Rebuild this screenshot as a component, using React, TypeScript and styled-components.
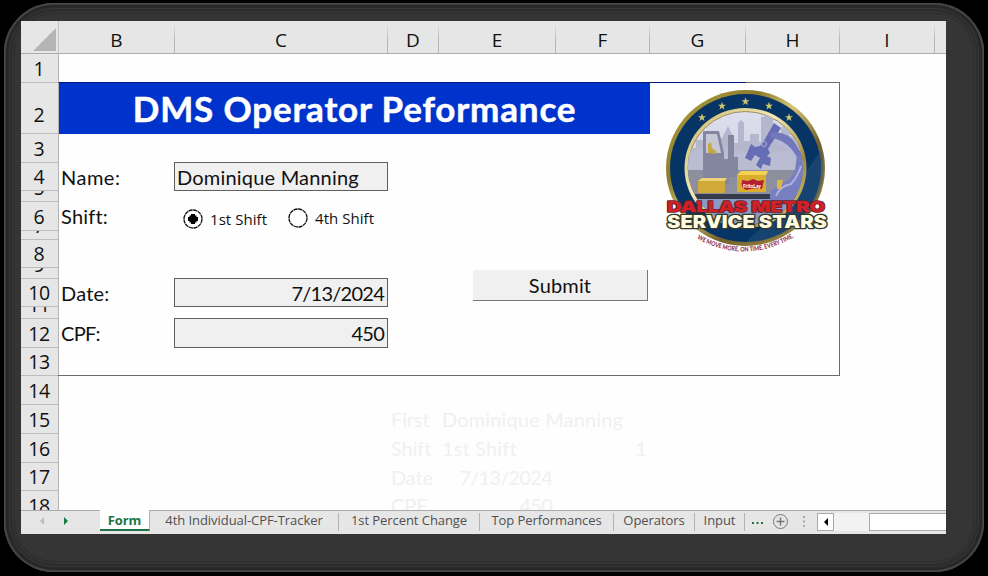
import React from "react";
import styled, { createGlobalStyle } from "styled-components";

const Global = createGlobalStyle`
  *{box-sizing:border-box}
  html,body{margin:0;background:#000}
`;
const Page = styled.div`
  width:988px;height:576px;padding:3px 4px 4px 4px;background:#000;overflow:hidden;
`;
const Bezel = styled.div`
  height:569px;padding:18px 37px 38px 17px;border-radius:50px;background:#353535;
  box-shadow:inset 0 0 0 1px #484848,inset 0 0 0 2px #404040,inset 0 0 0 3px #242424,inset 0 0 0 5px #292929,
    inset 0 0 0 6px #363636,inset 0 0 0 8px #2c2c2c,inset 0 0 0 10px #333,inset 0 0 0 11px #2e2e2e;
`;
const Workbook = styled.main`
  width:925px;height:513px;display:flex;flex-direction:column;background:#fefefe;overflow:hidden;
  font-family:"Open Sans","Noto Sans",sans-serif;color:#111;
`;
const ColumnBar = styled.div`
  height:33px;flex:none;display:grid;grid-template-columns:38px 116px 213px 51px 117px 94px 96px 94px 95px 11px;
  background:#e6e6e6;border-bottom:1px solid #acacac;
`;
const Corner = styled.div`
  border-right:1px solid #c3c3c3;padding:6px 2px 0 12px;svg{display:block}
`;
const ColumnHead = styled.div`
  height:32px;padding-top:5px;font-size:19px;line-height:28px;text-align:center;
  border-right:1px solid;border-image:linear-gradient(#e6e6e6 8%,#b5b5b5 60%) 1;
  &:last-child{border:0}
`;
const Body = styled.div`height:456px;flex:none;display:flex;overflow:hidden;`;
const RowBar = styled.div`width:38px;flex:none;background:#e6e6e6;border-right:1px solid #b4b4b4;`;
const RowHead = styled.div<{ $h: number }>`
  height:${(p) => p.$h}px;padding:0 1px ${(p) => (p.$h > 40 ? 5 : 0)}px 0;border-bottom:1px solid #bdbdbd;
  overflow:hidden;display:flex;align-items:flex-end;justify-content:center;font-size:19.5px;line-height:26px;
  letter-spacing:-0.3px;
  span{flex:none;height:26px}
`;
const Sheet = styled.div`
  flex:1;display:grid;grid-template-columns:116px 213px 51px 117px 94px 96px 94px 95px 11px;
  grid-template-rows:29px 51px 29px 28px 11px 29px 9px 28px 11px 28px 12px 29px 28px 29px 29px 29px 28px 29px;
  font-family:Lato,"Open Sans",sans-serif;
`;
const FormBorder = styled.div`
  grid-area:2 / 1 / 14 / 8;margin:-1px 0 0 -1px;border:1px solid #6b6b6b;border-left:0;
`;
const Title = styled.h1`
  grid-area:2 / 1 / 3 / 6;margin:-1px 0 0;background:#0033cc;border-top:1px solid #001b78;color:#fff;
  font-size:35px;line-height:51px;font-weight:700;text-align:center;letter-spacing:0.82px;white-space:nowrap;
  -webkit-text-stroke:0.5px #fff;
`;
const NavyRule = styled.div`grid-area:2 / 6 / 3 / 7;height:1px;margin-top:-1px;background:#00197c;`;
const Label = styled.div<{ $row: number; $gap?: number }>`
  grid-row:${(p) => p.$row};grid-column:1;padding-left:2px;font-size:20px;line-height:28px;white-space:nowrap;
  letter-spacing:${(p) => p.$gap ?? 0.2}px;
`;
const Field = styled.div<{ $row: number; $end?: boolean }>`
  grid-row:${(p) => p.$row};grid-column:2;margin:-1px 0 0 -1px;border:1px solid #5f5f5f;background:#f0f0f0;
  padding:0 3px 0 2px;font-size:20px;line-height:28px;white-space:nowrap;
  text-align:${(p) => (p.$end ? "right" : "left")};letter-spacing:${(p) => (p.$end ? -0.75 : 0.2)}px;
`;
const Radios = styled.div`
  grid-area:6 / 2 / 7 / 3;display:flex;align-items:flex-start;padding:6px 0 0 8px;
`;
const Radio = styled.label<{ $w: number; $up?: boolean }>`
  width:${(p) => p.$w}px;display:flex;align-items:center;gap:7px;margin-top:${(p) => (p.$up ? -1 : 0)}px;
  font:15px/22px "Open Sans",sans-serif;letter-spacing:0.05px;white-space:nowrap;
  svg{flex:none}
`;
const Submit = styled.button`
  grid-area:9 / 4 / 11 / 6;margin:2px 2px 6px 34px;border:0;border-right:1px solid #777;border-bottom:1px solid #777;
  padding:0;background:#f0f0f0;color:#111;font:20px/30px Lato,sans-serif;letter-spacing:0.15px;
`;
const Ghost = styled.div<{ $row: number; $col: number; $end?: boolean }>`
  grid-row:${(p) => p.$row};grid-column:${(p) => p.$col};color:#f0f0f0;font-size:20px;line-height:29px;
  white-space:nowrap;padding:0 4px 0 3px;text-align:${(p) => (p.$end ? "right" : "left")};
  letter-spacing:${(p) => (p.$end ? -0.75 : p.$col === 4 ? 0.15 : -0.1)}px;
`;
const LogoCell = styled.div`grid-area:2 / 6 / 11 / 8;padding:4px 0 0 14px;svg{display:block}`;
const TabBar = styled.footer`
  height:24px;flex:none;display:flex;background:#e6e6e6;border-top:1px solid #ababab;font-size:13px;color:#505050;
`;
const TabNav = styled.div`width:79px;display:flex;gap:18px;padding:6px 0 0 18px;`;
const Tab = styled.div<{ $w: number; $active?: boolean }>`
  width:${(p) => p.$w}px;flex:none;text-align:center;white-space:nowrap;letter-spacing:-0.06px;
  line-height:${(p) => (p.$active ? 19 : 14)}px;height:${(p) => (p.$active ? 21 : 18)}px;
  margin-top:${(p) => (p.$active ? -1 : 2)}px;padding-top:${(p) => (p.$active ? 1 : 0)}px;
  font-weight:${(p) => (p.$active ? 700 : 400)};color:${(p) => (p.$active ? "#217346" : "#505050")};
  background:${(p) => (p.$active ? "#fff" : "transparent")};
  border-right:1px solid #b2b2b2;border-bottom:${(p) => (p.$active ? "2px solid #217346" : "0")};
`;
const TabTools = styled.div`display:flex;svg{display:block}`;
const Scroll = styled.div`
  flex:1;height:18px;margin-top:2px;display:flex;background:#f2f2f2;
`;
const ScrollButton = styled.div`width:17px;border:1px solid #a9a9a9;background:#fff;svg{display:block}`;
const Thumb = styled.div`flex:1;margin-left:35px;border:1px solid #a9a9a9;border-right:0;background:#fff;`;

const rows = [29, 51, 29, 28, 11, 29, 9, 28, 11, 28, 12, 29, 28, 29, 29, 29, 28, 29];
const columns = ["B", "C", "D", "E", "F", "G", "H", "I", ""];
const tabs: [string, number][] = [
  ["4th Individual-CPF-Tracker", 189], ["1st Percent Change", 141], ["Top Performances", 134],
  ["Operators", 81], ["Input", 50],
];

const Dot = ({ on }: { on?: boolean }) => (
  <svg width="20" height="20" viewBox="0 0 20 20">
    <circle cx="10" cy="10" r="9" fill="#fff" stroke="#111" strokeWidth="1.3" strokeDasharray="4.2 .5" />
    {on && <path d="M8 5h4v1.500h1.500V8H15v4h-1.500v1.500H12V15H8v-1.500H6.500V12H5V8h1.500V6.500H8z" fill="#000" />}
  </svg>
);

const star = "M0-4.200 1-1.200H4L1.600.600 2.500 3.600 0 1.800-2.500 3.600-1.600.600-4-1.200H-1z";

const Logo = () => (
  <svg width="166" height="168" viewBox="664 87 166 168">
    <defs>
      <linearGradient id="gold" x1="0" y1="0" x2="1" y2="1">
        <stop offset="0" stopColor="#b9a844" /><stop offset=".3" stopColor="#8c7a2c" />
        <stop offset=".45" stopColor="#d6c774" /><stop offset=".65" stopColor="#74602a" /><stop offset="1" stopColor="#a8984a" />
      </linearGradient>
      <linearGradient id="rim" x1="0" y1="0" x2="1" y2="1">
        <stop offset="0" stopColor="#c9b461" /><stop offset=".4" stopColor="#f3eab7" />
        <stop offset=".7" stopColor="#a28a3d" /><stop offset="1" stopColor="#e0d28a" />
      </linearGradient>
      <linearGradient id="sky" x1="0" y1="0" x2="0" y2="1">
        <stop offset="0" stopColor="#dedfee" /><stop offset="1" stopColor="#bfc1d4" />
      </linearGradient>
      <clipPath id="scene"><ellipse cx="745.500" cy="168" rx="57.500" ry="56.500" /></clipPath>
      <path id="motto" d="M697 238.500Q746 266 797 235.500" />
    </defs>
    <ellipse cx="745.500" cy="168" rx="79.500" ry="78" fill="url(#gold)" />
    <ellipse cx="745.500" cy="168" rx="75.500" ry="74" fill="#063565" />
    <path d="M821 150A75.500 74 0 0 1 746 242L780 210Z" fill="#28527d" opacity=".5" />
    <ellipse cx="745.500" cy="168" rx="61" ry="60" fill="url(#rim)" />
    <ellipse cx="745.500" cy="168" rx="57.500" ry="56.500" fill="url(#sky)" stroke="#8a7a43" strokeWidth=".8" />
    <g clipPath="url(#scene)">
      <path d="M686 171V148h10v-8h10v-8h10v6h6l6-12 6 12v5h4v-20l3-3 3 3v18h6v-7h9v8h2v-25h3v-3h7v3h2v18h8v-8h9v12h10v31z" fill="#b4b7cd" />
      <path d="M687 155q20-14 45-6t73-2v25H687z" fill="#bdc0d2" opacity=".65" />
      <path d="M685 170h122v30H685z" fill="#8c8f9e" />
      <path d="M688 194h115v6H688z" fill="#353b4a" />
      <path d="M685 199h122v30H685z" fill="#8a9ac4" />
      <path d="M703 176v-44q0-1 2-1h14l5 22v6h4v-24h6v22h4v20h-9v7h-26z" fill="#84869f" />
      <path d="M706 134h11l4 19h-15z" fill="#c7c8d7" />
      <path d="m708 144 3-2 1 6 5 4-2 2-7-1z" fill="#c5a948" />
      <path d="M775 136q15-7 23 9l2 24q-6-18-25-27z" fill="#b7b9d8" />
      <path d="m774 123 7 5-13 21 2 4-3 3 4 2-1 8-7-2-2 5-5-4 4-7-5-3-4 6-6-3 6-14 4 3 5-1 5-7z" fill="#666db5" />
      <path d="M771 133q18-3 27 15l5 8-4 5q-10-21-28-23z" fill="#7378bb" />
      <circle cx="764" cy="144" r="2.500" fill="none" stroke="#aaaede" />
      <path d="M797 155q9 1 9 13l-3 33h-32q-4-10 6-14 15-7 18-17z" fill="#777fc0" />
      <path d="M776 196q4-10 15-12 7-8 10-18" stroke="#aeb1dd" strokeWidth="2" fill="none" />
    </g>
    <path d="m698 181 4-3h25l-2 3v12h-27z" fill="#d1a938" /><path d="m698 181 4-3h25l-2 3z" fill="#efd276" />
    <path d="m737 175 4-4h27l-2 4v17h-29z" fill="#daae2c" /><path d="m737 175 4-4h27l-2 4z" fill="#f4d252" />
    <path d="M777 180h6l-2 9h-4z" fill="#ddb64c" />
    <path d="m742 180 6 1 5-2 5 2 6-1-2 9q-8-2-15 1-7-1-5-10z" fill="#b51f32" />
    <text x="743" y="188" fontSize="6" fontFamily="Lato" fontWeight="900" fill="#fff" textLength="18" lengthAdjust="spacingAndGlyphs">FritoLay</text>
    {[[702, 117.5], [722, 106], [745.5, 101.5], [769, 106], [789, 117.5]].map(([x, y]) => (
      <path key={x} d={star} transform={`translate(${x} ${y})`} fill="#cbc76d" />
    ))}
    <g fontFamily="Inter" fontWeight="900" paintOrder="stroke" strokeLinejoin="round">
      <text x="667" y="212" fontSize="15" textLength="158" lengthAdjust="spacingAndGlyphs" fill="#d32026" stroke="#5e2430" strokeWidth="1.500">DALLAS METRO</text>
      <text x="667" y="227.500" fontSize="17.500" textLength="160" lengthAdjust="spacingAndGlyphs" fill="#fffbe0" stroke="#323826" strokeWidth="2.500">SERVICE STARS</text>
    </g>
    <text fontFamily="Lato" fontWeight="900" fontSize="6.500" fill="#923452">
      <textPath href="#motto" textLength="102" lengthAdjust="spacingAndGlyphs">WE MOVE MORE, ON TIME, EVERY TIME.</textPath>
    </text>
  </svg>
);

export default function App() {
  return (
    <Page>
      <Global />
      <Bezel>
        <Workbook>
          <ColumnBar>
            <Corner><svg width="23" height="24"><path d="M23 1v23H0z" fill="#b4b4b4" /></svg></Corner>
            {columns.map((c, i) => <ColumnHead key={i}>{c}</ColumnHead>)}
          </ColumnBar>
          <Body>
            <RowBar>{rows.map((h, i) => <RowHead key={i} $h={h}><span>{i + 1}</span></RowHead>)}</RowBar>
            <Sheet>
              <FormBorder />
              <Title>DMS Operator Peformance</Title>
              <NavyRule />
              <Label $row={4} $gap={0.5}>Name:</Label>
              <Field $row={4}>Dominique Manning</Field>
              <Label $row={6}>Shift:</Label>
              <Radios>
                <Radio $w={105}><Dot on />1st Shift</Radio>
                <Radio $w={100} $up><Dot />4th Shift</Radio>
              </Radios>
              <Label $row={10}>Date:</Label>
              <Field $row={10} $end>7/13/2024</Field>
              <Submit>Submit</Submit>
              <Label $row={12} $gap={-0.7}>CPF:</Label>
              <Field $row={12} $end>450</Field>
              <LogoCell><Logo /></LogoCell>
              <Ghost $row={15} $col={3}>First</Ghost><Ghost $row={15} $col={4}>Dominique Manning</Ghost>
              <Ghost $row={16} $col={3}>Shift</Ghost><Ghost $row={16} $col={4}>1st Shift</Ghost><Ghost $row={16} $col={5} $end>1</Ghost>
              <Ghost $row={17} $col={3}>Date</Ghost><Ghost $row={17} $col={4} $end>7/13/2024</Ghost>
              <Ghost $row={18} $col={3}>CPF</Ghost><Ghost $row={18} $col={4} $end>450</Ghost>
            </Sheet>
          </Body>
          <TabBar>
            <TabNav>
              <svg width="6" height="8"><path d="M5 0v8L1 4z" fill="#bcbcbc" /></svg>
              <svg width="6" height="8"><path d="M1 0v8l4-4z" fill="#107c41" /></svg>
            </TabNav>
            <Tab $w={50} $active>Form</Tab>
            {tabs.map(([name, w]) => <Tab key={name} $w={w}>{name}</Tab>)}
            <TabTools>
              <svg width="72" height="23">
                <path d="M7 11h2v2H7zM11.500 11h2v2h-2zM16 11h2v2h-2z" fill="#217346" />
                <circle cx="35.500" cy="10.500" r="7" fill="none" stroke="#777" /><path d="M31.500 10.500h8M35.500 6.500v8" stroke="#777" strokeWidth="1.500" />
                <path d="M58 5h2v2h-2zM58 9.500h2v2h-2zM58 14h2v2h-2z" fill="#aaa" />
              </svg>
            </TabTools>
            <Scroll>
              <ScrollButton><svg width="15" height="16"><path d="M10 4v8L6 8z" fill="#000" /></svg></ScrollButton>
              <Thumb />
            </Scroll>
          </TabBar>
        </Workbook>
      </Bezel>
    </Page>
  );
}
